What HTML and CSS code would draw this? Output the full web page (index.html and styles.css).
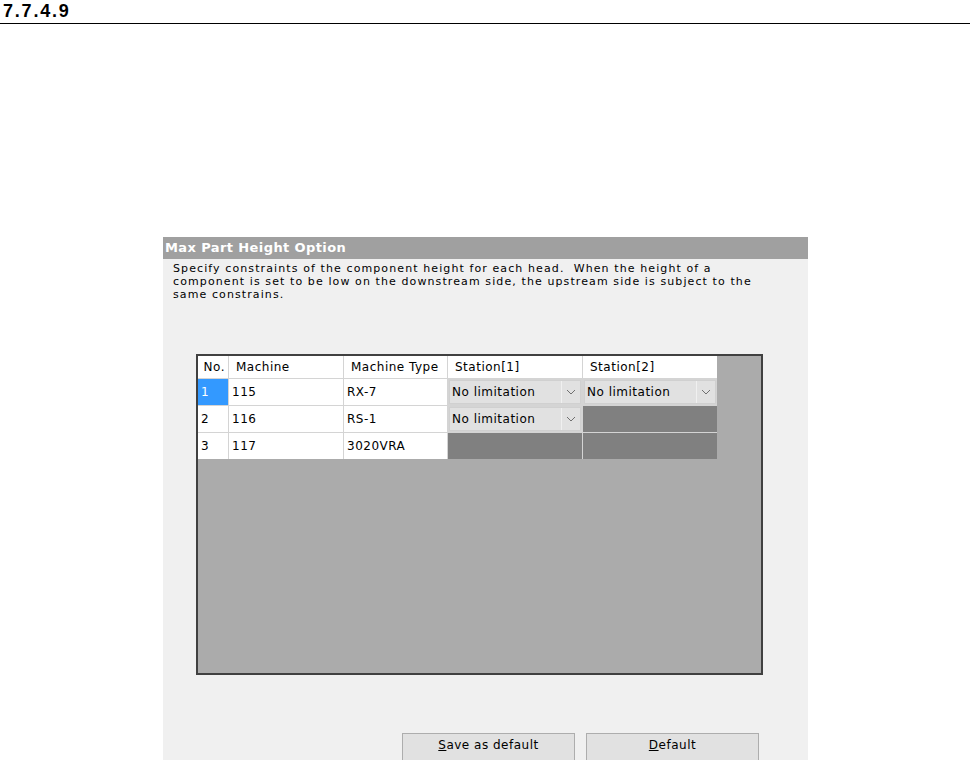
FILE: index.html
```html
<!DOCTYPE html>
<html lang="en">
<head>
    <meta charset="UTF-8">
    <meta name="viewport" content="width=device-width, initial-scale=1.0">
    <title>Max Part Height Option</title>
    <link rel="stylesheet" href="styles.css">
</head>
<body>
    <div class="docHeading">7.7.4.9</div>

    <div class="dialog">
        <div class="titleBar">Max Part Height Option</div>
        <p class="description">Specify constraints of the component height for each head.&nbsp; When the height of a<br>component is set to be low on the downstream side, the upstream side is subject to the<br>same constrains.</p>

        <div class="gridPanel">
            <div class="grid">
                <div class="headCell alignRight">No.</div>
                <div class="headCell">Machine</div>
                <div class="headCell">Machine Type</div>
                <div class="headCell">Station[1]</div>
                <div class="headCell">Station[2]</div>

                <div class="cell selectedCell">1</div>
                <div class="cell">115</div>
                <div class="cell">RX-7</div>
                <div class="comboCell"><span>No limitation</span><span class="comboArrow"><svg width="10" height="6" viewBox="0 0 10 6"><path d="M1 1 L5 5 L9 1" fill="none" stroke="#707070" stroke-width="1"/></svg></span></div>
                <div class="comboCell"><span>No limitation</span><span class="comboArrow"><svg width="10" height="6" viewBox="0 0 10 6"><path d="M1 1 L5 5 L9 1" fill="none" stroke="#707070" stroke-width="1"/></svg></span></div>

                <div class="cell">2</div>
                <div class="cell">116</div>
                <div class="cell">RS-1</div>
                <div class="comboCell"><span>No limitation</span><span class="comboArrow"><svg width="10" height="6" viewBox="0 0 10 6"><path d="M1 1 L5 5 L9 1" fill="none" stroke="#707070" stroke-width="1"/></svg></span></div>
                <div class="disabledCell"></div>

                <div class="cell">3</div>
                <div class="cell">117</div>
                <div class="cell">3020VRA</div>
                <div class="disabledCell"></div>
                <div class="disabledCell"></div>
            </div>
        </div>

        <div class="buttonRow">
            <button class="dialogButton"><u>S</u>ave as default</button>
            <button class="dialogButton"><u>D</u>efault</button>
        </div>
    </div>
</body>
</html>
```

FILE: styles.css
```css
* {
    box-sizing: border-box;
}

body {
    margin: 0;
    background-color: #fff;
    font-family: "DejaVu Sans", "Liberation Sans", sans-serif;
    color: #000;
}

.docHeading {
    height: 24px;
    padding: 1px 0 0 3px;
    border-bottom: 1px solid #000;
    font-family: "Liberation Sans", Arial, sans-serif;
    font-size: 18px;
    font-weight: bold;
    letter-spacing: 1.8px;
}

.dialog {
    margin: 213px 0 0 163px;
    width: 645px;
    height: 523px;
    overflow: hidden;
    background-color: #f0f0f0;
}

.titleBar {
    height: 22px;
    line-height: 22px;
    padding-left: 2px;
    background-color: #a0a0a0;
    color: #fff;
    font-size: 13px;
    font-weight: bold;
    letter-spacing: 0.4px;
}

.description {
    margin: 0;
    padding: 3px 0 0 10px;
    font-size: 11px;
    line-height: 13px;
    letter-spacing: 1.1px;
}

.gridPanel {
    margin: 53px 0 0 33px;
    width: 567px;
    height: 321px;
    border: 2px solid #404040;
    background-color: #ababab;
}

.grid {
    display: grid;
    grid-template-columns: 30px 114px 103px 134px 134px;
    grid-template-rows: 22px 26px 26px 26px;
    gap: 1px;
    width: 519px;
    background-color: #d4d4d4;
    font-size: 12px;
    letter-spacing: 0.5px;
}

.headCell {
    display: flex;
    align-items: center;
    padding-left: 7px;
    background-color: #fff;
}

.alignRight {
    justify-content: flex-end;
    padding: 0 3px 0 0;
}

.cell {
    display: flex;
    align-items: center;
    padding-left: 3px;
    background-color: #fff;
}

.selectedCell {
    background-color: #3399ff;
    color: #fff;
}

.comboCell {
    display: flex;
    align-items: center;
    justify-content: space-between;
    padding-left: 2px;
    margin: 1px;
    background-color: #e1e1e1;
    border: 1px solid #d0d0d0;
}

.comboArrow {
    display: flex;
    align-items: center;
    justify-content: center;
    width: 19px;
    height: 100%;
    border-left: 1px solid #f0f0f0;
}

.disabledCell {
    background-color: #808080;
}

.buttonRow {
    display: flex;
    justify-content: flex-end;
    gap: 11px;
    margin-top: 58px;
    padding-right: 49px;
}

.dialogButton {
    width: 173px;
    height: 28px;
    padding: 0 0 4px 0;
    background-color: #e1e1e1;
    border: 1px solid #adadad;
    font-family: "DejaVu Sans", "Liberation Sans", sans-serif;
    font-size: 12px;
    letter-spacing: 0.5px;
    color: #000;
}
```
